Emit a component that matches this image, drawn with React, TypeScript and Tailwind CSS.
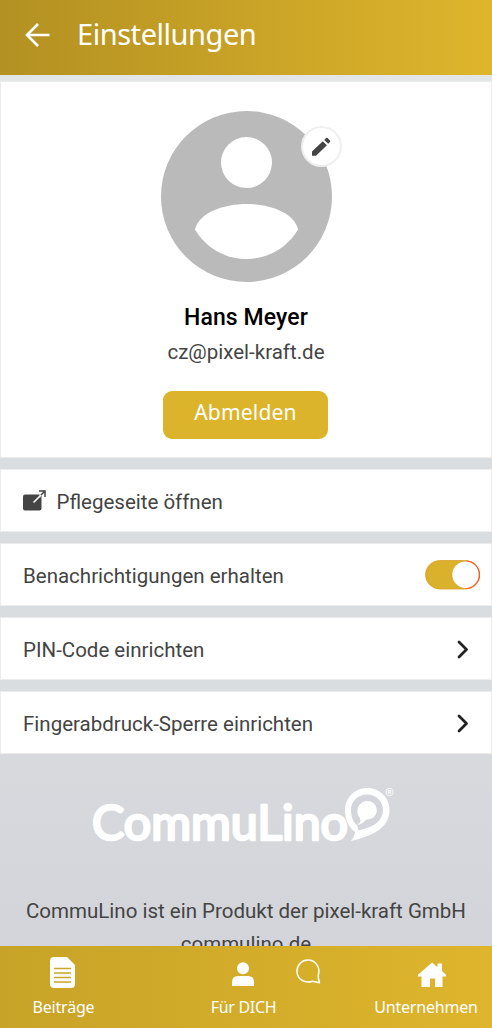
import type { ReactNode } from 'react'

function SettingsRow({ label, icon, action }: { label: string; icon?: ReactNode; action?: ReactNode }) {
  return (
    <div className="flex h-[63px] items-center border border-[#ececec] bg-white pl-[22px] pr-[11px]">
      {icon}
      <span className="whitespace-nowrap pt-[2px] text-[20.5px] leading-6">{label}</span>
      <span className="ml-auto">{action}</span>
    </div>
  )
}

function Chevron() {
  return (
    <svg className="mr-[10px] h-5 w-[14px]" viewBox="0 0 14 20" fill="none" stroke="#222" strokeWidth="2.8">
      <path d="M3 3l7.500 7.500L3 18" strokeLinecap="round" strokeLinejoin="round" />
    </svg>
  )
}

function Toggle() {
  return (
    <svg className="block h-[30px] w-[55px]" viewBox="0 0 55 30">
      <rect x="0.500" y="0.500" width="54" height="28.500" rx="14.250" fill="#d9b12b" stroke="#d9a02b" strokeWidth="0.800" />
      <path d="M41 .5a14.200 14.200 0 0 1 0 28.500" fill="#ff5a1c" />
      <circle cx="40.500" cy="14.700" r="13.200" fill="#fff" />
    </svg>
  )
}

function Logo() {
  return (
    <svg className="block h-[90px] w-[330px]" viewBox="0 0 330 90">
      <text x="12" y="70" textLength="256" lengthAdjust="spacingAndGlyphs" fontFamily="Lato, sans-serif" fontSize="47.500" fontWeight="400" fill="#fff" stroke="#fff" strokeWidth="2.600" strokeLinejoin="round">
        CommuLino
      </text>
      <path d="M271 71C273 68 274.500 66 275 62C268 57 265 48 265 40C265 28 275 18 287 18C300 18 309.500 28 309.500 40C309.500 58 292 66 271 71Z" fill="#fff" />
      <path d="M277.500 60.500C278 59 278.500 58 277 55.500C272.500 51 271 46 271 40C271 31 278 24.500 287 24.500C296 24.500 303 31 303 40C303 51 293 58 277.500 60.500Z" fill="#d4d5da" />
      <path d="M276 55C280.500 53.500 281.500 51 279.500 47.500C274.500 41 279 31 287 31C293 31 296.800 35 296.800 40.500C296.800 46 292 49.800 286 49.800C284 53 281 54.500 276 55Z" fill="#fff" />
      <circle cx="309.500" cy="22" r="3.700" fill="none" stroke="#fff" strokeWidth="0.800" />
      <text x="309.500" y="24.300" textAnchor="middle" fontFamily="Roboto, sans-serif" fontSize="6" fontWeight="700" fill="#fff">R</text>
    </svg>
  )
}

export default function App() {
  return (
    <div className="flex h-[1028px] w-full flex-col overflow-hidden bg-[#d9dde0] font-[Roboto,sans-serif] text-[#444]">
      <header className="flex h-[75px] shrink-0 items-center bg-linear-to-r from-[#b39122] to-[#dfb52c] pb-[7px] pl-[25px] text-white">
        <svg className="mr-[27px] mt-[1px] h-6 w-[25px]" viewBox="0 0 25 24" fill="none" stroke="currentColor" strokeWidth="2.600">
          <path d="M13 1L2 12l11 11M2 12h22.500" />
        </svg>
        <h1 className="whitespace-nowrap font-['Noto_Sans',sans-serif] text-[29px] leading-10 tracking-[-0.45px]">Einstellungen</h1>
      </header>

      <main className="flex min-h-0 flex-1 flex-col overflow-hidden">
        <div className="h-[6px] shrink-0 bg-[#e3e6e7]" />
        <section className="flex h-[377px] shrink-0 flex-col items-center border border-[#ececec] bg-white pt-[29px]">
          <div className="relative">
            <svg className="h-[171px] w-[171px]" viewBox="0 0 171 171">
              <circle cx="85.500" cy="85.500" r="85.500" fill="#bababa" />
              <circle cx="85.500" cy="51.500" r="25.500" fill="#fff" />
              <path d="M34 118.500C38 101 64 93 85.500 93S133 101 137 118.500C126 137 107 148 85.500 148S45 137 34 118.500Z" fill="#fff" />
            </svg>
            <div className="absolute left-[140px] top-[15px] flex h-[41px] w-[41px] items-center justify-center rounded-full border-[2.500px] border-[#efefef] bg-white">
              <svg className="h-5 w-5" viewBox="0 0 20 20" fill="#444">
                <path d="M1 14.500L11.800 4.200l4.100 4.100L5 18.800H1zM13.200 3l1.900-1.900q.8-.7 1.500 0l2.300 2.400q.7.700 0 1.400l-1.700 1.800z" />
              </svg>
            </div>
          </div>
          <div className="mt-[21px] text-[23px] font-medium leading-[30px] tracking-[0.1px] text-black">Hans Meyer</div>
          <div className="mt-[4px] text-[20.500px] leading-[30px]">cz@pixel-kraft.de</div>
          <button className="mr-px mt-[24px] h-[48px] w-[165px] rounded-[9px] bg-[#dcb42c] pb-[7px] font-['Noto_Sans',sans-serif] text-[21px] leading-6 tracking-[0.2px] text-white">
            Abmelden
          </button>
        </section>

        <div className="mt-[11px] flex shrink-0 flex-col gap-[11px]">
          <SettingsRow
            label="Pflegeseite öffnen"
            icon={
              <svg className="mr-[10.500px] h-[22px] w-[23px]" viewBox="0 0 23 22" fill="none">
                <rect x="0" y="4.500" width="18.500" height="16" rx="2" fill="#444" />
                <path d="M17 1v6.500" stroke="#fff" strokeWidth="1" />
                <path d="M11 12L21.500 1.500M16 1h6v6" stroke="#444" strokeWidth="1.500" />
                <path d="M10.500 12.500L18 5" stroke="#fff" strokeWidth="1.600" />
              </svg>
            }
          />
          <SettingsRow label="Benachrichtigungen erhalten" action={<Toggle />} />
          <SettingsRow label="PIN-Code einrichten" action={<Chevron />} />
          <SettingsRow label="Fingerabdruck-Sperre einrichten" action={<Chevron />} />
        </div>

        <footer className="flex flex-1 flex-col items-center bg-linear-to-b from-[#d7d9dd] to-[#d3d4d9] pt-[16px]">
          <div className="mr-[2px]">
            <Logo />
          </div>
          <p className="mt-[35px] whitespace-nowrap text-center text-[20.500px] leading-[33px]">
            CommuLino ist ein Produkt der pixel-kraft GmbH
            <br />
            commulino.de
          </p>
        </footer>
      </main>

      <nav className="flex h-[82px] shrink-0 bg-linear-to-r from-[#c7a327] to-[#deb52c] font-['Noto_Sans',sans-serif] text-[16px] leading-6 text-white">
        <div className="flex w-[127px] flex-col items-center pt-[11px]">
          <svg className="mr-[3px] h-[31px] w-[25px]" viewBox="0 0 25 31">
            <path d="M4 0h13l8 8v19q0 4-4 4H4q-4 0-4-4V4q0-4 4-4Z" fill="#fff" />
            <path d="M4 11.500h17M4 16h17M4 20.500h17M4 25h17" stroke="#caa628" strokeWidth="1.300" />
          </svg>
          <span className="mt-[7px] tracking-[-0.2px]">Beiträge</span>
        </div>
        <div className="ml-[74px] flex w-[85px] flex-col items-center pt-[16px]">
          <svg className="mr-px h-6 w-6" viewBox="0 0 24 24" fill="#fff">
            <circle cx="12" cy="6.300" r="6" />
            <path d="M1 24v-4q0-6 6-6h10q6 0 6 6v4z" />
          </svg>
          <span className="mt-[9px] whitespace-nowrap tracking-[-0.3px]">Für DICH</span>
        </div>
        <div className="ml-[10px] w-[27px] pt-[13px]">
          <svg className="h-[26px] w-[26px]" viewBox="0 0 26 26" fill="none" stroke="#fff" strokeWidth="1.500">
            <path d="M22.300 16.200C24.500 9 20 1 11.900 1C6 1 1 6 1 12C1 20 8.500 25 16.500 22.200L23.500 23.700C22.500 21 21.900 19 22.300 16.200Z" strokeLinejoin="round" />
          </svg>
        </div>
        <div className="ml-auto flex w-[132px] flex-col items-center pt-[16px]">
          <svg className="ml-[12px] h-[25px] w-7" viewBox="0 0 28 25" fill="#fff">
            <path d="M14 .5l5.500 4.700V1.500h4.500v7.600l4 3.600v1.800h-3.500V25h-7.500v-8.500h-5V25H3.500V14.500H0v-1.800Z" />
          </svg>
          <span className="mt-[8px] tracking-[-0.2px]">Unternehmen</span>
        </div>
      </nav>
    </div>
  )
}
